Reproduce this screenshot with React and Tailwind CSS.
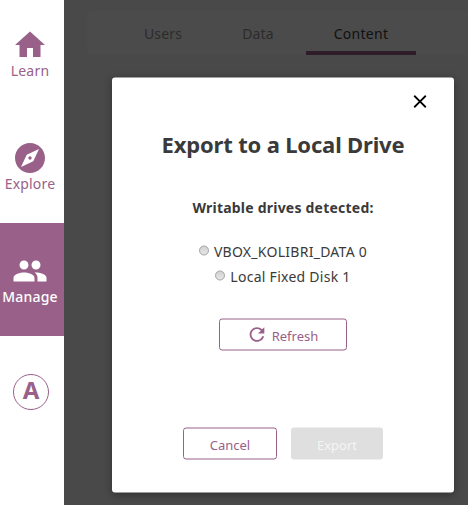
import { MdHome, MdExplore, MdPeople, MdRefresh, MdClose } from "react-icons/md";

function NavItem({ icon: Icon, label, active }) {
  return (
    <a
      className={`flex h-[113px] shrink-0 flex-col items-center pt-[30px] pr-1 ${
        active ? "bg-[#996189] text-white" : "text-[#996189]"
      }`}
    >
      <Icon className="size-9 shrink-0" />
      <span className={`text-[14px] leading-4 tracking-[0.2px] ${active ? "font-medium" : ""}`}>{label}</span>
    </a>
  );
}

function Drive({ name }) {
  return (
    <label className="flex h-[25px] items-center justify-center gap-[5px]">
      <span className="mb-[2px] size-[10px] rounded-full border border-[#a0a0a0] bg-linear-to-b from-[#d2d2d2] to-[#e6e6e6]" />
      <span>{name}</span>
    </label>
  );
}

export default function App() {
  return (
    <div className="relative flex h-[505px] w-[468px] overflow-hidden bg-[#494949] font-['Noto_Sans',sans-serif] text-[14px] text-[#3a3a3a]">
      <nav className="flex w-16 shrink-0 flex-col bg-white">
        <div className="-mt-[3px] flex flex-col">
          <NavItem icon={MdHome} label="Learn" />
          <NavItem icon={MdExplore} label="Explore" />
          <NavItem icon={MdPeople} label="Manage" active />
        </div>
        <div className="mt-[38px] ml-[13px] flex size-9 items-center justify-center rounded-full border border-[#996189] pb-[5px] text-[24px] font-bold text-[#996189]">
          A
        </div>
      </nav>

      <main className="flex-1 pt-[11px] pl-[23px]">
        <div className="flex h-11 rounded-l bg-[#4b4b4b] pl-[21px] leading-[46px] text-[#2b2b2b]">
          <span className="w-[110px] text-center tracking-[0.15px]">Users</span>
          <span className="w-[80px] text-center tracking-[0.15px]">Data</span>
          <span className="ml-[8px] w-[110px] border-b-4 border-[#2e1d29] text-center tracking-[0.3px] text-[#111]">
            Content
          </span>
        </div>
      </main>

      <section className="absolute top-[285px] left-[112px] flex h-[415px] w-[342px] [transform:translateY(-50%)] flex-col rounded-[3px] bg-white shadow-[0_2px_8px_rgba(0,0,0,0.33)]">
        <button className="mt-[12px] mr-[22px] flex size-6 items-center justify-center self-end text-black">
          <MdClose className="size-[22px]" />
        </button>
        <h1 className="mt-[14px] text-center text-[22px] leading-8 font-bold tracking-[-0.17px]">
          Export to a Local Drive
        </h1>
        <h2 className="mt-[36px] text-center text-[14px] leading-6 font-bold tracking-[0.22px]">
          Writable drives detected:
        </h2>
        <div className="mt-[19px] tracking-[0.27px]">
          <Drive name="VBOX_KOLIBRI_DATA 0" />
          <Drive name="Local Fixed Disk 1" />
        </div>
        <button className="mt-[30px] flex h-8 w-32 shrink-0 items-center justify-center gap-[4px] self-center rounded-[3px] border border-[#996189] pr-[2px] text-[13px] text-[#996189]">
          <MdRefresh className="size-[22px]" />
          <span className="pt-[3px]">Refresh</span>
        </button>
        <div className="mt-[77px] flex justify-center gap-[14px] text-[13px]">
          <button className="h-8 w-[94px] rounded-[3px] border border-[#996189] pt-[4px] text-[#996189]">Cancel</button>
          <button className="h-8 w-[92px] rounded-[3px] bg-[#dfdfdf] pt-[4px] text-[#f5f5f5]">Export</button>
        </div>
      </section>
    </div>
  );
}
